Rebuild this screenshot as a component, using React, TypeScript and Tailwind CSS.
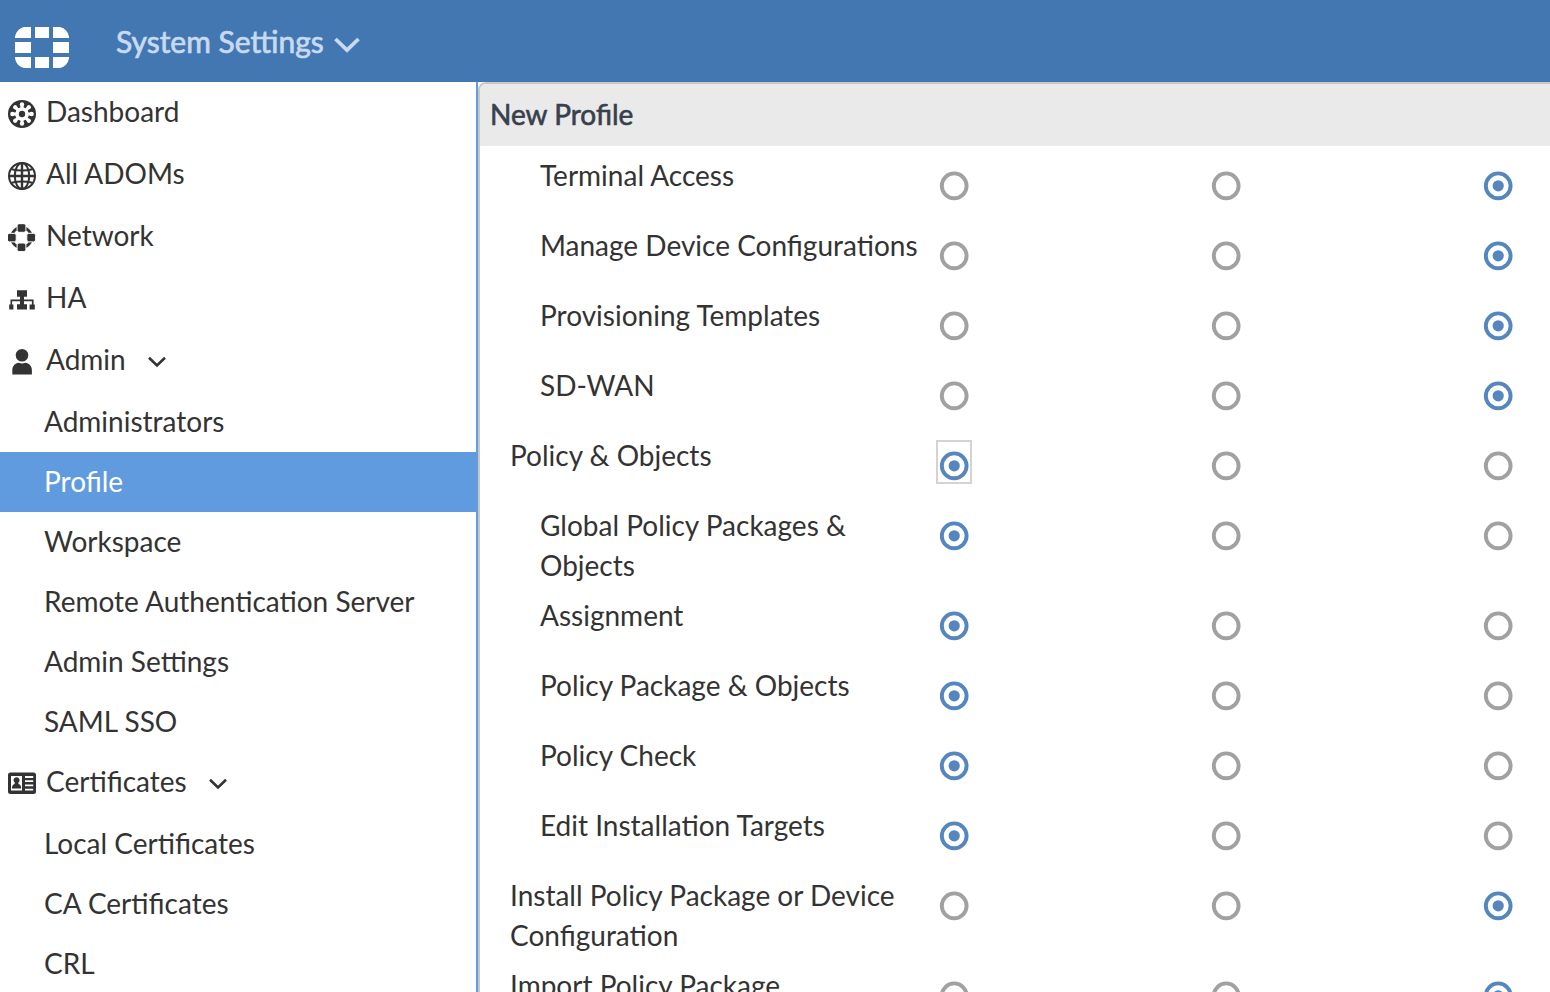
import React from "react";

type IconName = "dashboard" | "globe" | "network" | "ha" | "user" | "cert";

function Icon({ name }: { name: IconName }) {
  const spokes = [0, 45, 90, 135, 180, 225, 270, 315];
  return (
    <svg viewBox="0 0 28 28" className="mt-0.5 h-7 w-7 shrink-0" fill="currentColor">
      {name === "dashboard" && (
        <>
          <circle cx="14" cy="14" r="14" />
          <circle cx="14" cy="14" r="6.800" fill="#fff" />
          {spokes.map((a) => (
            <g key={a} transform={`rotate(${a} 14 14)`} fill="#fff">
              <circle cx="14" cy="4.400" r="2.200" />
              <path d="M12.700 4h2.600l.5 5h-3.600z" />
            </g>
          ))}
          <circle cx="14" cy="14" r="3.200" />
        </>
      )}
      {name === "globe" && (
        <g fill="none" stroke="currentColor" strokeWidth="2">
          <circle cx="14" cy="14" r="13" />
          <ellipse cx="14" cy="14" rx="7.2" ry="13" />
          <path d="M3.500 7.200q10.500 2.600 21 0M3.500 20.800q10.500-2.600 21 0" />
          <path d="M14 1v26M1 14h26" strokeWidth="2.400" />
        </g>
      )}
      {name === "network" && (
        <>
          <circle cx="13.500" cy="13.500" r="10" fill="none" stroke="currentColor" strokeWidth="2.800" />
          <g stroke="#fff" strokeWidth="1">
            <rect x="9.100" y="-.3" width="8.800" height="8.600" rx="2" />
            <rect x="9.100" y="19" width="8.800" height="8.600" rx="2" />
            <rect x="-.6" y="9.300" width="8.800" height="8.600" rx="2" />
            <rect x="18.800" y="9.300" width="8.800" height="8.600" rx="2" />
          </g>
        </>
      )}
      {name === "ha" && (
        <path d="M9 4.200h10v6.600h-3v2.700h9.600v4.900h1.200v5h-5.200v-5h2.300v-3.200H16v3h3v5.200H9v-5.200h3v-3H4.100v3.200h1.300v5H1.200v-5h1.300v-4.900H12v-2.700H9z" />
      )}
      {name === "user" && (
        <path d="M14 1a6.300 6.300 0 1 1 0 12.600A6.300 6.300 0 0 1 14 1M4.300 26.400v-4.200c0-4.300 2.800-6.900 6.300-7.500q3.400 1.500 6.800 0c3.700.6 6.500 3.200 6.500 7.500v4.200z" />
      )}
      {name === "cert" && (
        <>
          <path
            fillRule="evenodd"
            d="M2.500 2.500h23A2.500 2.500 0 0 1 28 5v16.500a2.500 2.500 0 0 1-2.500 2.500h-23A2.500 2.500 0 0 1 0 21.500V5A2.500 2.500 0 0 1 2.500 2.500M3 6v14.600h11V6zM17 6v1.900h8.200V6zM17 10.200v1.900h8.200v-1.900zM17 14.400v1.900h8.200v-1.900zM17 18.700v1.900h8.200v-1.900z"
          />
          <path d="M8.500 7.200a3 3 0 0 1 1.900 5.400v1.500c1.900.5 2.800 1.700 2.800 4.400H3.900c0-2.700.9-3.900 2.800-4.400v-1.500a3 3 0 0 1 1.800-5.400" />
        </>
      )}
    </svg>
  );
}

function Caret() {
  return (
    <svg viewBox="0 0 18 12" className="mt-0.5 h-3 w-[18px]" fill="none" stroke="currentColor" strokeWidth="2.600">
      <path d="M1 1.800l8 7.700 8-7.700" />
    </svg>
  );
}

function Group({ icon, label, open }: { icon: IconName; label: string; open?: boolean }) {
  return (
    <div className="flex h-[62px] shrink-0 items-center pl-2">
      <Icon name={icon} />
      <span className="-mt-1 ml-2.5 mr-[22px]">{label}</span>
      {open && <Caret />}
    </div>
  );
}

function Sub({ label, active }: { label: string; active?: boolean }) {
  return (
    <div className={`flex h-[60px] shrink-0 items-center pb-0.5 pl-11 ${active ? "bg-[#5f9bde] text-white" : ""}`}>
      {label}
    </div>
  );
}

function Radio({ on, focus }: { on: boolean; focus?: boolean }) {
  return (
    <div
      className={`flex h-11 w-9 items-center justify-center border-2 pt-2 ${focus ? "border-[#d3d3d3]" : "border-transparent"}`}
    >
      <svg viewBox="0 0 30 30" className="h-[30px] w-[30px] shrink-0">
        <circle cx="15.200" cy="14.800" r="12.400" fill="#fff" stroke={on ? "#5587be" : "#a1a1a1"} strokeWidth="3.900" />
        {on && <circle cx="15.200" cy="14.800" r="5.600" fill="#5587be" />}
      </svg>
    </div>
  );
}

const rows: { label: string; value: number; top?: boolean; focus?: boolean }[] = [
  { label: "Terminal Access", value: 2 },
  { label: "Manage Device Configurations", value: 2 },
  { label: "Provisioning Templates", value: 2 },
  { label: "SD-WAN", value: 2 },
  { label: "Policy & Objects", value: 0, top: true, focus: true },
  { label: "Global Policy Packages & Objects", value: 0 },
  { label: "Assignment", value: 0 },
  { label: "Policy Package & Objects", value: 0 },
  { label: "Policy Check", value: 0 },
  { label: "Edit Installation Targets", value: 0 },
  { label: "Install Policy Package or Device Configuration", value: 2, top: true },
  { label: "Import Policy Package", value: 2, top: true },
];

export default function App() {
  return (
    <div className="flex h-[992px] w-[1550px] flex-col overflow-hidden bg-white font-['Lato',sans-serif] text-[28px] leading-10 text-[#333]">
      <header className="flex h-[82px] shrink-0 items-center bg-[#4377b1] text-[#c7daf1]">
        <svg viewBox="0 0 54 41" className="ml-[15px] mt-[13px] h-[41px] w-[54px]" fill="#fff">
          <path d="M9 0h7v11H0V9.500Q1.500 2 9 0M20 0h14v11H20zM38 0h7q7.500 2 9 9.500V11H38zM0 15h16v11H0zM38 15h16v11H38zM0 30h16v11H9Q1.500 39 0 31.500zM20 30h14v11H20zM38 30h16v1.500Q52.500 39 45 41h-7z" />
        </svg>
        <span className="ml-[47px] text-[30px] [-webkit-text-stroke:0.7px_currentColor]">System Settings</span>
        <svg viewBox="0 0 26 16" className="ml-2.5 mt-[7px] h-4 w-[26px]" fill="none" stroke="currentColor" strokeWidth="3.800">
          <path d="M1.500 2l11.500 11L24.500 2" />
        </svg>
      </header>
      <div className="flex min-h-0 flex-1">
        <nav className="flex w-[478px] shrink-0 flex-col overflow-hidden border-r-2 border-[#629ddf]">
          <Group icon="dashboard" label="Dashboard" />
          <Group icon="globe" label="All ADOMs" />
          <Group icon="network" label="Network" />
          <Group icon="ha" label="HA" />
          <Group icon="user" label="Admin" open />
          <Sub label="Administrators" />
          <Sub label="Profile" active />
          <Sub label="Workspace" />
          <Sub label="Remote Authentication Server" />
          <Sub label="Admin Settings" />
          <Sub label="SAML SSO" />
          <Group icon="cert" label="Certificates" open />
          <Sub label="Local Certificates" />
          <Sub label="CA Certificates" />
          <Sub label="CRL" />
        </nav>
        <main className="min-w-0 flex-1 overflow-hidden rounded-tl-lg border-l-2 border-t-2 border-[#c8c8c8]">
          <h1 className="mb-[5px] flex h-[62px] items-center bg-[#eaeaea] pb-0.5 pl-2.5 text-[#37414c] [-webkit-text-stroke:0.6px_currentColor]">
            New Profile
          </h1>
          {rows.map((r) => (
            <div key={r.label} className="flex min-h-[70px] items-start">
              <div className={`w-[456px] shrink-0 pb-1.5 pt-1 ${r.top ? "pl-[30px] pr-8" : "pl-[60px] pr-4"}`}>
                {r.label}
              </div>
              <div className="flex gap-[236.200px] pt-[9px]">
                {[0, 1, 2].map((i) => (
                  <Radio key={i} on={r.value === i} focus={r.focus && i === 0} />
                ))}
              </div>
            </div>
          ))}
        </main>
      </div>
    </div>
  );
}
